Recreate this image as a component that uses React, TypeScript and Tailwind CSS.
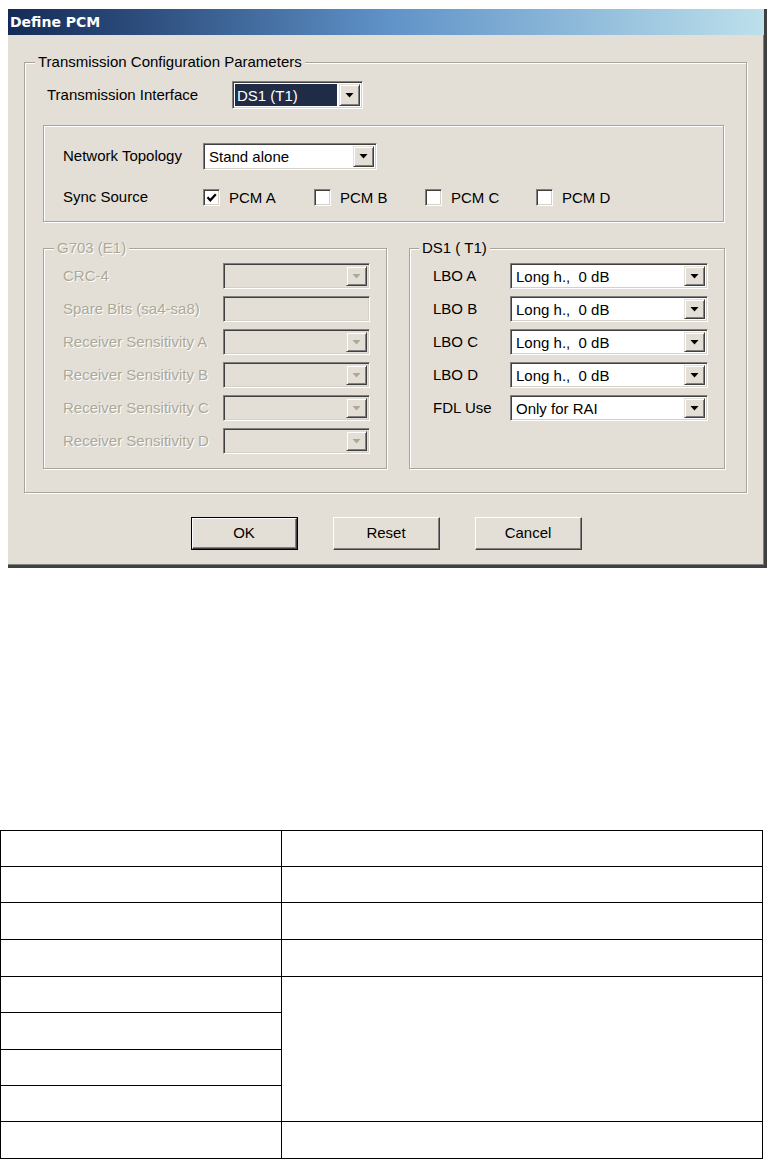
import React from "react";

const sunken =
  "border border-t-[#808080] border-l-[#808080] border-b-white border-r-white shadow-[inset_1px_1px_0_#404040,inset_-1px_-1px_0_#d4d0c8]";

function Arrow({ disabled }: { disabled?: boolean }) {
  return (
    <div className="w-[21px] h-full bg-[#e3dfd6] border border-t-[#e3dfd6] border-l-[#e3dfd6] border-r-[#404040] border-b-[#404040] shadow-[inset_1px_1px_0_#fff,inset_-1px_-1px_0_#808080] flex items-center justify-center shrink-0">
      <svg width="9" height="5" viewBox="0 0 9 5">
        <polygon points="0.5,0 8.5,0 4.5,4.5" fill={disabled ? "#aca899" : "#000"} />
      </svg>
    </div>
  );
}

function Select({
  value,
  className,
  highlight,
  disabled,
}: {
  value: string;
  className: string;
  highlight?: boolean;
  disabled?: boolean;
}) {
  return (
    <div className={`flex ${sunken} ${disabled ? "bg-[#e3dfd6]" : "bg-white"} p-[2px] ${className}`}>
      {highlight ? (
        <div className="flex-1 flex items-center bg-[#202b46] text-white pl-[2px] mr-[2px] whitespace-pre leading-none">
          {value}
        </div>
      ) : (
        <div className="flex-1 flex items-center pl-[3px] whitespace-pre leading-none">{value}</div>
      )}
      <Arrow disabled={disabled} />
    </div>
  );
}

function Check({ checked, label }: { checked?: boolean; label: string }) {
  return (
    <div className="w-[111px] flex items-center gap-[9px]">
      <div className={`w-[17px] h-[17px] bg-white ${sunken} flex items-center justify-center`}>
        {checked && (
          <svg width="11" height="11" viewBox="0 0 11 11">
            <path d="M1.5 5.2 L4.3 8.2 L9.8 2.2" stroke="#000" strokeWidth="2.3" fill="none" />
          </svg>
        )}
      </div>
      <span className="leading-none">{label}</span>
    </div>
  );
}

function Group({
  title,
  className,
  titleClass,
  children,
}: {
  title?: string;
  className: string;
  titleClass?: string;
  children: React.ReactNode;
}) {
  return (
    <div className={`relative border border-[#a8a49c] shadow-[1px_1px_0_#fff,inset_1px_1px_0_#fff] ${className}`}>
      {title && (
        <span
          className={`absolute -top-[10px] px-[3px] bg-[#e3dfd6] leading-[18px] whitespace-pre ${titleClass ?? ""}`}
        >
          {title}
        </span>
      )}
      {children}
    </div>
  );
}

const disabledText = "text-[#aca899] [text-shadow:1px_1px_0_#fff]";

function Button({ label, def }: { label: string; def?: boolean }) {
  const inner = (
    <div className="w-full h-full flex items-center justify-center bg-[#e3dfd6] border border-t-white border-l-white border-r-[#404040] border-b-[#404040] shadow-[inset_-1px_-1px_0_#808080]">
      {label}
    </div>
  );
  return def ? (
    <div className="w-[107px] h-[33px] border border-black">{inner}</div>
  ) : (
    <div className="w-[107px] h-[33px]">{inner}</div>
  );
}

export default function App() {
  const g703 = [
    { l: "CRC-4", t: "sel" },
    { l: "Spare Bits (sa4-sa8)", t: "input" },
    { l: "Receiver Sensitivity A", t: "sel" },
    { l: "Receiver Sensitivity B", t: "sel" },
    { l: "Receiver Sensitivity C", t: "sel" },
    { l: "Receiver Sensitivity D", t: "sel" },
  ];
  const ds1 = [
    { l: "LBO A", v: "Long h.,  0 dB" },
    { l: "LBO B", v: "Long h.,  0 dB" },
    { l: "LBO C", v: "Long h.,  0 dB" },
    { l: "LBO D", v: "Long h.,  0 dB" },
    { l: "FDL Use", v: "Only for RAI" },
  ];
  const rowH = ["h-[36px]", "h-[36px]", "h-[37px]", "h-[37px]", "h-[36px]", "h-[37px]", "h-[36px]", "h-[36px]", "h-[37px]"];

  return (
    <div className="w-[769px] h-[1160px] bg-white pt-[9px] font-['Liberation_Sans',Arial,sans-serif] text-[15px] text-black overflow-hidden">
      {/* Dialog */}
      <div className="ml-[8px] w-[759px] border-r-[3px] border-b-[3px] border-r-[#404040] border-b-[#404040]">
        <div className="h-[26px] flex items-center pl-[2px] bg-gradient-to-r from-[#152b57] via-[#5f92c8] to-[#bde0ea]">
          <span className="text-white font-bold font-['DejaVu_Sans',sans-serif] text-[14px] leading-none">
            Define PCM
          </span>
        </div>
        <div className="h-[530px] bg-[#e3dfd6] pt-[27px] shadow-[inset_-1px_-1px_0_#808080]">
          <div className="pl-[16px]">
            <Group title="Transmission Configuration Parameters" className="w-[723px] h-[431px]" titleClass="left-[10px]">
              <div className="pt-[18px] pl-[22px] flex items-center h-[46px]">
                <span className="w-[185px]">Transmission Interface</span>
                <Select value="DS1 (T1)" highlight className="w-[131px] h-[28px]" />
              </div>
              <div className="mt-[16px] ml-[18px]">
                <Group className="w-[681px] h-[97px]">
                  <div className="pt-[17px] pl-[19px] flex items-center">
                    <span className="w-[140px]">Network Topology</span>
                    <Select value="Stand alone" className="w-[174px] h-[27px]" />
                  </div>
                  <div className="mt-[19px] pl-[19px] flex items-center h-[17px]">
                    <span className="w-[140px]">Sync Source</span>
                    <Check checked label="PCM A" />
                    <Check label="PCM B" />
                    <Check label="PCM C" />
                    <Check label="PCM D" />
                  </div>
                </Group>
              </div>
              <div className="mt-[26px] ml-[18px] flex gap-[22px]">
                <Group title="G703 (E1)" className="w-[344px] h-[221px]" titleClass={`left-[10px] ${disabledText}`}>
                  <div className="pt-[14px] pl-[19px] flex flex-col gap-[7px]">
                    {g703.map((r) => (
                      <div key={r.l} className="flex items-center h-[26px]">
                        <span className={`w-[160px] whitespace-nowrap ${disabledText}`}>{r.l}</span>
                        {r.t === "sel" ? (
                          <Select value="" disabled className="w-[147px] h-[26px]" />
                        ) : (
                          <div className={`w-[147px] h-[26px] bg-[#e3dfd6] ${sunken}`} />
                        )}
                      </div>
                    ))}
                  </div>
                </Group>
                <Group title="DS1 ( T1)" className="w-[316px] h-[221px]" titleClass="left-[9px]">
                  <div className="pt-[14px] pl-[23px] flex flex-col gap-[7px]">
                    {ds1.map((r) => (
                      <div key={r.l} className="flex items-center h-[26px]">
                        <span className="w-[77px] whitespace-nowrap">{r.l}</span>
                        <Select value={r.v} className="w-[198px] h-[26px]" />
                      </div>
                    ))}
                  </div>
                </Group>
              </div>
            </Group>
          </div>
          <div className="mt-[24px] flex justify-center gap-[35px]">
            <Button label="OK" def />
            <Button label="Reset" />
            <Button label="Cancel" />
          </div>
        </div>
      </div>

      {/* Table */}
      <div className="mt-[262px] w-[763px] grid grid-cols-[281px_481px] border-l border-t border-black">
        {rowH.map((h, i) => (
          <React.Fragment key={i}>
            <div className={`${h} border-r border-b border-black`} style={{ gridRow: i + 1, gridColumn: 1 }} />
            {(i < 4 || i === 8) && (
              <div className={`${h} border-r border-b border-black`} style={{ gridRow: i + 1, gridColumn: 2 }} />
            )}
            {i === 4 && (
              <div className="border-r border-b border-black" style={{ gridRow: "5 / span 4", gridColumn: 2 }} />
            )}
          </React.Fragment>
        ))}
      </div>
    </div>
  );
}
